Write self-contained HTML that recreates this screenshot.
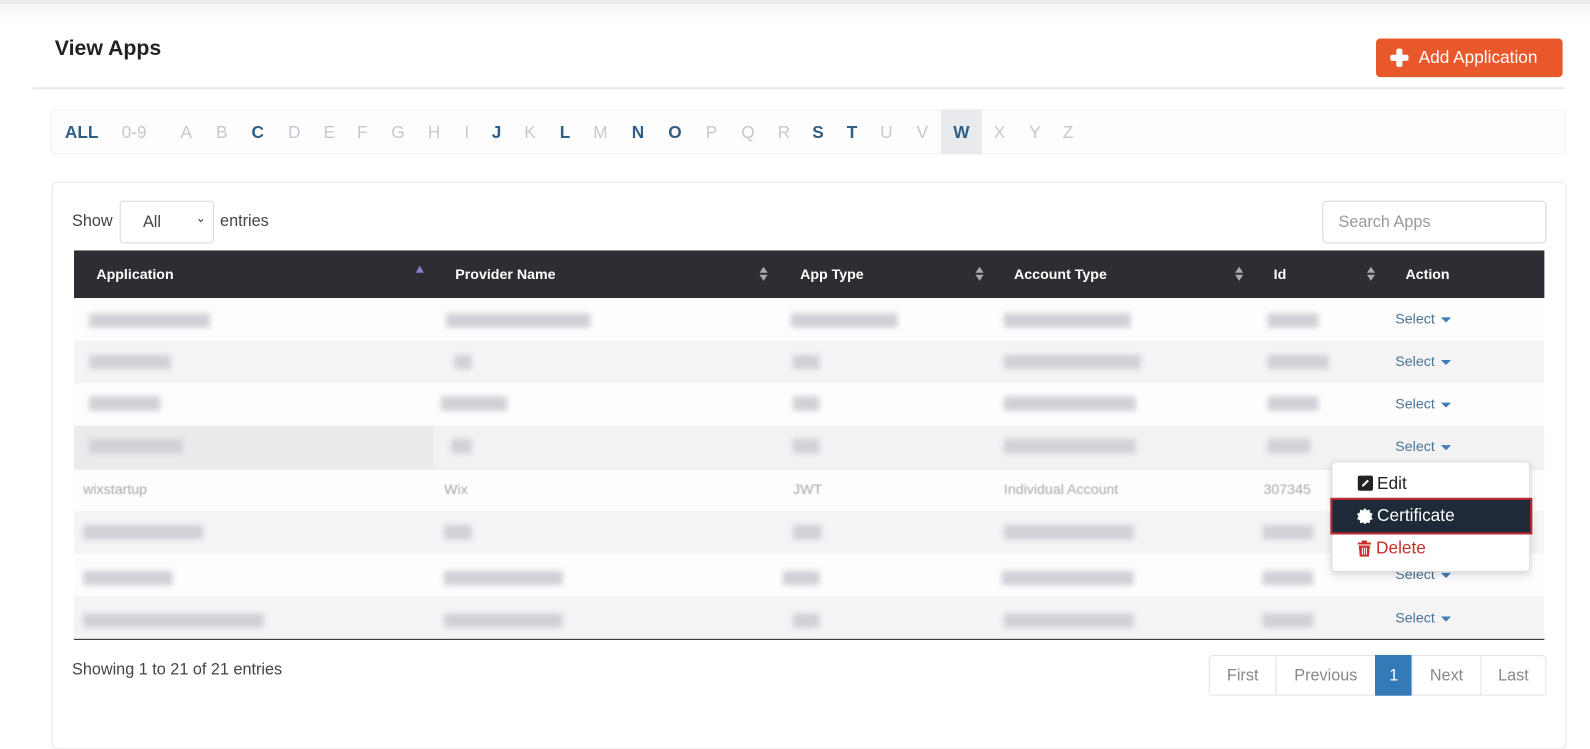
<!DOCTYPE html>
<html><head><meta charset="utf-8">
<style>
html,body{margin:0;padding:0;background:#fff;overflow:hidden;width:1590px;height:723px}
#w{position:absolute;left:0;top:0;width:1568px;height:713px;transform:scale(1.01403);transform-origin:0 0;font-family:"Liberation Sans",sans-serif;background:#fff}
.a{position:absolute}
.b{position:absolute;background:#d0d0d6;filter:blur(2.5px);height:14px;margin-top:-1px}
.sel{position:absolute;left:1376px;font-size:14px;color:#4b7393}
.sel:after{content:"";display:inline-block;margin-left:6px;border-left:5px solid transparent;border-right:5px solid transparent;border-top:5px solid #3d7cb5;vertical-align:middle}
.th{position:absolute;top:262px;color:#fff;font-size:14px;font-weight:bold}
.sort{position:absolute;top:262px;width:8px;height:16px}
.lt{position:absolute;top:121px;font-size:17px;color:#c5c8cc}
.lt.on{color:#2f5f86;font-weight:bold}
.pg{position:absolute;top:646px;height:40px;line-height:40px;font-size:16px;color:#888;text-align:center;border:1px solid #e2e2e6;box-sizing:border-box;background:#fff}
</style></head><body><div id="w">
<div class="a" style="left:0;top:0;width:1568px;height:4px;background:#ececec"></div>
<div class="a" style="left:0;top:4px;width:1568px;height:16px;background:linear-gradient(#f3f3f4,#fff)"></div>
<div class="a" style="left:54px;top:36px;font-size:21px;font-weight:bold;color:#222">View Apps</div>
<div class="a" style="left:1357px;top:38px;width:184px;height:38px;background:#e8582a;border-radius:4px;color:#fff;font-size:17px;line-height:38px">
 <span style="position:absolute;left:14px;top:10px;width:18px;height:18px"><span style="position:absolute;left:6px;top:0;width:6px;height:18px;background:#fff;border-radius:2px"></span><span style="position:absolute;left:0;top:6px;width:18px;height:6px;background:#fff;border-radius:2px"></span></span>
 <span style="position:absolute;left:42px">Add Application</span></div>
<div class="a" style="left:32px;top:86px;width:1512px;height:2px;background:#e8e8ea"></div>
<div class="a" style="left:50px;top:108px;width:1494px;height:44px;border:1px solid #f0f0f2;border-radius:4px;box-sizing:border-box;background:#fdfdfe"></div>
<div class="a" style="left:928px;top:108px;width:40px;height:44px;background:#e9eaee"></div>
<span class="lt on" style="left:64px">ALL</span><span class="lt" style="left:120px">0-9</span><span class="lt" style="left:178px">A</span><span class="lt" style="left:213px">B</span><span class="lt on" style="left:248px">C</span><span class="lt" style="left:284px">D</span><span class="lt" style="left:319px">E</span><span class="lt" style="left:352px">F</span><span class="lt" style="left:386px">G</span><span class="lt" style="left:422px">H</span><span class="lt" style="left:458px">I</span><span class="lt on" style="left:485px">J</span><span class="lt" style="left:517px">K</span><span class="lt on" style="left:552px">L</span><span class="lt" style="left:585px">M</span><span class="lt on" style="left:623px">N</span><span class="lt on" style="left:659px">O</span><span class="lt" style="left:696px">P</span><span class="lt" style="left:731px">Q</span><span class="lt" style="left:767px">R</span><span class="lt on" style="left:801px">S</span><span class="lt on" style="left:835px">T</span><span class="lt" style="left:868px">U</span><span class="lt" style="left:904px">V</span><span class="lt on" style="left:940px">W</span><span class="lt" style="left:980px">X</span><span class="lt" style="left:1015px">Y</span><span class="lt" style="left:1048px">Z</span>
<div class="a" style="left:51px;top:179px;width:1494px;height:560px;border:1px solid #e6e6ea;border-radius:6px;box-sizing:border-box"></div>
<div class="a" style="left:71px;top:210px;font-size:16px;color:#444">Show</div>
<div class="a" style="left:118px;top:198px;width:93px;height:42px;border:1px solid #d8d8dc;border-radius:4px;box-sizing:border-box"><span style="position:absolute;left:22px;top:12px;font-size:16px;color:#444">All</span><span style="position:absolute;left:74px;top:9px;font-size:12px;color:#333">&#8964;</span></div>
<div class="a" style="left:217px;top:210px;font-size:16px;color:#444">entries</div>
<div class="a" style="left:1304px;top:198px;width:221px;height:42px;border:1px solid #d6d6da;border-radius:4px;box-sizing:border-box"><span style="position:absolute;left:15px;top:12px;font-size:16px;color:#999">Search Apps</span></div>
<div class="a" style="left:73px;top:247px;width:1450px;height:47px;background:#2d2d33"></div>
<span class="th" style="left:95px">Application</span><span class="th" style="left:449px">Provider Name</span><span class="th" style="left:789px">App Type</span><span class="th" style="left:1000px">Account Type</span><span class="th" style="left:1256px">Id</span><span class="th" style="left:1386px">Action</span>
<div class="a" style="left:410px;top:262px;border-left:4px solid transparent;border-right:4px solid transparent;border-bottom:7px solid #8a7fd0"></div>
<svg class="sort" style="left:749px" viewBox="0 0 8 16"><path d="M0 7L4 1L8 7Z M0 9L4 15L8 9Z" fill="#aaa"/></svg>
<svg class="sort" style="left:962px" viewBox="0 0 8 16"><path d="M0 7L4 1L8 7Z M0 9L4 15L8 9Z" fill="#aaa"/></svg>
<svg class="sort" style="left:1218px" viewBox="0 0 8 16"><path d="M0 7L4 1L8 7Z M0 9L4 15L8 9Z" fill="#aaa"/></svg>
<svg class="sort" style="left:1348px" viewBox="0 0 8 16"><path d="M0 7L4 1L8 7Z M0 9L4 15L8 9Z" fill="#aaa"/></svg>
<div class="a" style="left:73px;top:294px;width:1450px;height:42px;background:#fdfdfe"></div>
<div class="a" style="left:73px;top:336px;width:1450px;height:42px;background:#f4f4f7"></div>
<div class="a" style="left:73px;top:378px;width:1450px;height:42px;background:#fdfdfe"></div>
<div class="a" style="left:73px;top:420px;width:1450px;height:42px;background:#f2f2f5"></div>
<div class="a" style="left:73px;top:420px;width:355px;height:42px;background:#ebebee"></div>
<div class="a" style="left:73px;top:462px;width:1450px;height:42px;background:#fdfdfe;border-top:1px solid #e8e8ec"></div>
<div class="a" style="left:73px;top:504px;width:1450px;height:42px;background:#f4f4f7"></div>
<div class="a" style="left:73px;top:546px;width:1450px;height:42px;background:#fdfdfe"></div>
<div class="a" style="left:73px;top:588px;width:1450px;height:42px;background:#f4f4f7"></div>
<div class="a" style="left:73px;top:630px;width:1450px;height:1px;background:#222"></div>
<div class="b" style="left:88px;top:310px;width:119px"></div><div class="b" style="left:440px;top:310px;width:142px"></div><div class="b" style="left:780px;top:310px;width:105px"></div><div class="b" style="left:990px;top:310px;width:125px"></div><div class="b" style="left:1250px;top:310px;width:50px"></div>
<div class="b" style="left:88px;top:351px;width:80px"></div><div class="b" style="left:448px;top:351px;width:17px"></div><div class="b" style="left:782px;top:351px;width:26px"></div><div class="b" style="left:990px;top:351px;width:135px"></div><div class="b" style="left:1250px;top:351px;width:60px"></div>
<div class="b" style="left:88px;top:392px;width:70px"></div><div class="b" style="left:435px;top:392px;width:65px"></div><div class="b" style="left:782px;top:392px;width:26px"></div><div class="b" style="left:990px;top:392px;width:130px"></div><div class="b" style="left:1250px;top:392px;width:50px"></div>
<div class="b" style="left:88px;top:434px;width:92px"></div><div class="b" style="left:445px;top:434px;width:20px"></div><div class="b" style="left:782px;top:434px;width:26px"></div><div class="b" style="left:990px;top:434px;width:130px"></div><div class="b" style="left:1250px;top:434px;width:42px"></div>
<div class="a" style="left:82px;top:474px;font-size:14px;color:#aaa;filter:blur(0.6px)">wixstartup</div><div class="a" style="left:438px;top:474px;font-size:14px;color:#aaa;filter:blur(0.6px)">Wix</div><div class="a" style="left:782px;top:474px;font-size:14px;color:#aaa;filter:blur(0.6px)">JWT</div><div class="a" style="left:990px;top:474px;font-size:14px;color:#aaa;filter:blur(0.6px)">Individual Account</div><div class="a" style="left:1246px;top:474px;font-size:14px;color:#aaa;filter:blur(0.6px)">307345</div>
<div class="b" style="left:82px;top:519px;width:118px"></div><div class="b" style="left:438px;top:519px;width:27px"></div><div class="b" style="left:782px;top:519px;width:28px"></div><div class="b" style="left:990px;top:519px;width:128px"></div><div class="b" style="left:1245px;top:519px;width:50px"></div>
<div class="b" style="left:82px;top:564px;width:88px"></div><div class="b" style="left:438px;top:564px;width:117px"></div><div class="b" style="left:772px;top:564px;width:36px"></div><div class="b" style="left:988px;top:564px;width:130px"></div><div class="b" style="left:1245px;top:564px;width:50px"></div>
<div class="b" style="left:82px;top:606px;width:178px"></div><div class="b" style="left:438px;top:606px;width:117px"></div><div class="b" style="left:782px;top:606px;width:26px"></div><div class="b" style="left:990px;top:606px;width:128px"></div><div class="b" style="left:1245px;top:606px;width:50px"></div>
<span class="sel" style="top:306px">Select</span><span class="sel" style="top:348px">Select</span><span class="sel" style="top:390px">Select</span><span class="sel" style="top:432px">Select</span><span class="sel" style="top:558px">Select</span><span class="sel" style="top:601px">Select</span>
<div class="a" style="left:1313px;top:455px;width:196px;height:109px;background:#fff;border:1px solid #ddd;border-radius:4px;box-sizing:border-box;box-shadow:0 3px 8px rgba(0,0,0,.15)"></div>
<div class="a" style="left:1339px;top:469px;width:15px;height:15px;background:#222;border-radius:2px"><svg width="15" height="15" viewBox="0 0 15 15" style="position:absolute;left:0;top:0"><path d="M4 11L4.5 9L9.5 4L11 5.5L6 10.5Z" fill="#fff"/></svg></div>
<div class="a" style="left:1358px;top:467px;font-size:17px;color:#222">Edit</div>
<div class="a" style="left:1312px;top:491px;width:199px;height:36px;background:#1e2a38;border:2px solid #c0282c;box-sizing:border-box"></div>
<svg class="a" style="left:1338px;top:501px" width="16" height="16" viewBox="0 0 16 16"><path d="M8 0L9.8 2.3L12.7 1.6L13 4.5L15.7 5.7L14.3 8.3L15.7 10.9L13 12.1L12.7 15L9.8 14.3L8 16L6.2 14.3L3.3 15L3 12.1L.3 10.9L1.7 8.3L.3 5.7L3 4.5L3.3 1.6L6.2 2.3Z" fill="#fff"/></svg>
<div class="a" style="left:1358px;top:499px;font-size:17px;color:#fff">Certificate</div>
<svg class="a" style="left:1339px;top:533px" width="13" height="16" viewBox="0 0 13 16"><path d="M4 0H9V2H13V4H0V2H4Z M1 5H12L11 16H2Z" fill="#c9302c"/><path d="M4.5 7V14M6.5 7V14M8.5 7V14" stroke="#fff" stroke-width="1"/></svg>
<div class="a" style="left:1357px;top:531px;font-size:17px;color:#c9302c">Delete</div>
<div class="a" style="left:71px;top:652px;font-size:16px;color:#444">Showing 1 to 21 of 21 entries</div>
<div class="pg" style="left:1192px;width:67px;border-radius:4px 0 0 4px">First</div>
<div class="pg" style="left:1258px;width:99px">Previous</div>
<div class="pg" style="left:1356px;width:37px;background:#337ab7;color:#fff;border-color:#337ab7">1</div>
<div class="pg" style="left:1392px;width:69px">Next</div>
<div class="pg" style="left:1460px;width:65px;border-radius:0 4px 4px 0">Last</div>
</div></body></html>
